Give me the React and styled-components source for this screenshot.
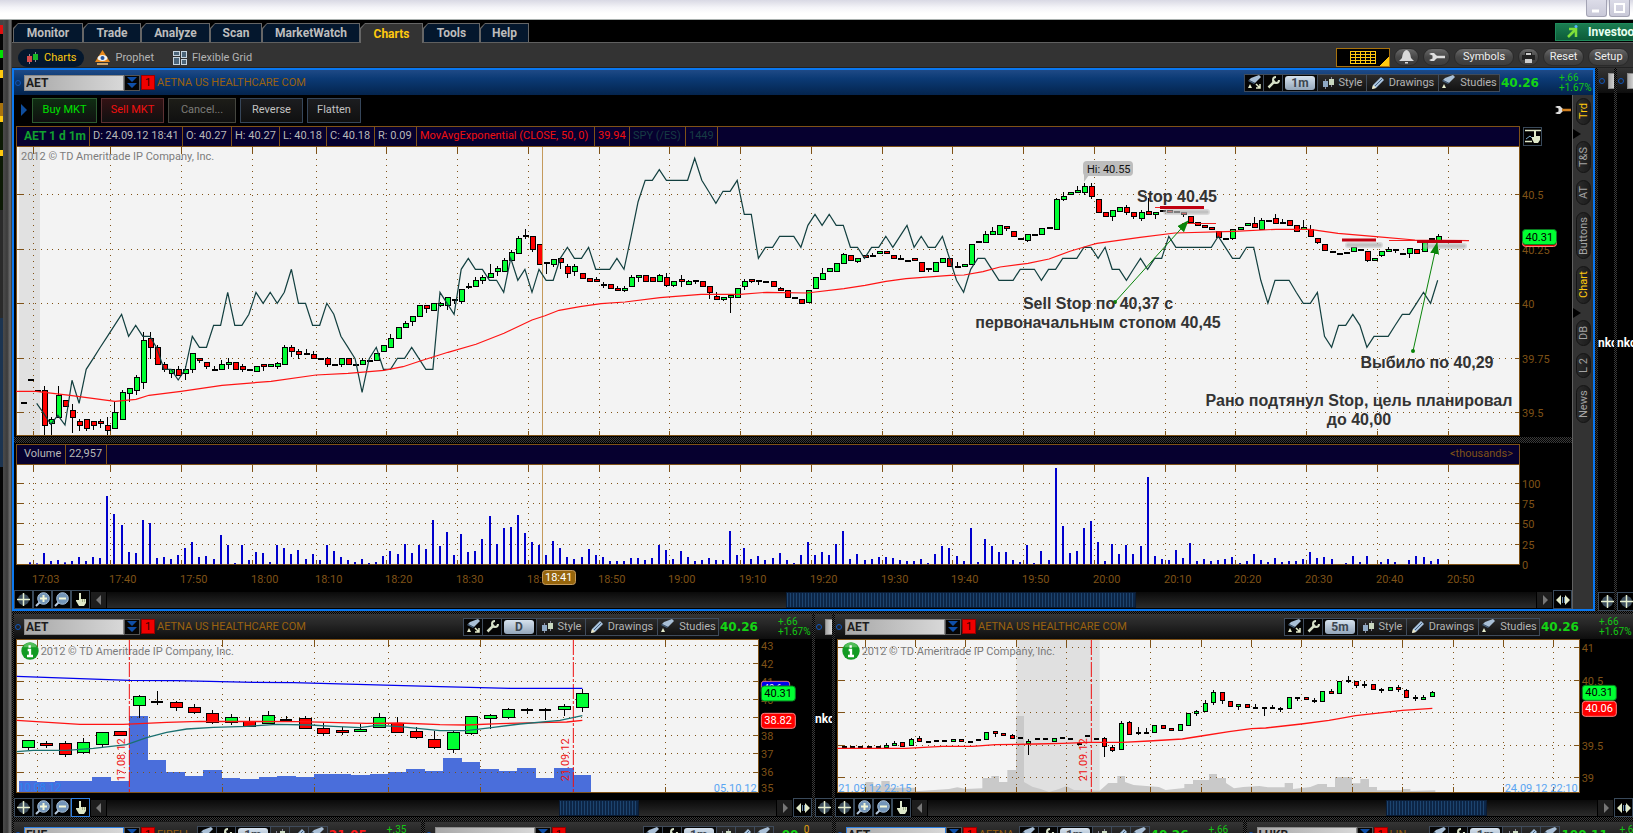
import React from "react";
import styled, { createGlobalStyle, css } from "styled-components";

const Global = createGlobalStyle`
  * { box-sizing: border-box; }
  body { margin: 0; background: #000; overflow: hidden; }
  button, input { font: inherit; color: inherit; margin: 0; padding: 0; border: 0; background: none; border-radius: 0; white-space: nowrap; }
  svg { display: block; flex: none; }
`;

const checker = "repeating-conic-gradient(#000 0 25%, #3a3a3a 0 50%) 0 0 / 2px 2px";
const brown = "#7f5217";

/* ---------- frame ---------- */
const Page = styled.div`
  display: flex; flex-direction: column; height: 100vh; overflow: hidden;
  font: 11px/14px Roboto, "Liberation Sans", Arial, sans-serif; color: #b9b9b9; background: #000;
`;
const WindowBar = styled.header`
  display: flex; justify-content: flex-end; gap: 2px; height: 20px; flex: none;
  padding-right: 3px; background: linear-gradient(#d9d9e4, #f4f4f8 40%, #fff 70%); border-bottom: 1px solid #a9b0ae;
`;
const WindowButton = styled.button`
  width: 21px; height: 17px; border: 1px solid #a3a3b4; border-top: 0; border-radius: 0 0 3px 3px;
  background: linear-gradient(#dcdce8, #c9c9d8); display: flex; justify-content: center; align-items: center;
`;
const Body = styled.div`display: flex; flex: 1; min-height: 0;`;
const Edge = styled.div`
  display: flex; width: 12px; flex: none;
  background: linear-gradient(90deg, #151515, #4a4a4a 30%, #3b3b3b 60%, #727272 85%, #333);
`;
const Behind = styled.div`
  width: 3px; background: linear-gradient(#444 0 5px, #e01010 5px 14px, #050505 14px 30px, #00e000 30px 38px, #050505 38px 50px, #ffc90e 50px 58px,
    #050505 58px 83px, #a9730d 83px 96px, #ffc90e 96px 102px, #0c1a05 102px 130px, #ffc90e 130px 136px, #0c1a05 136px 190px, #2a2a2a 190px 298px, #1c3450 298px 447px, #050505 447px);
`;
const Main = styled.main`display: flex; flex-direction: column; flex: 1; min-width: 0;`;
const TabRow = styled.nav`
  display: flex; height: 23px; padding: 3px 0 0 1px; flex: none; background: #000; border-bottom: 1px solid #606060;
`;
const Tab = styled.button`
  position: relative; width: ${p => p.$w}px; height: ${p => (p.$on ? 20 : 19)}px; flex: none;
  padding-top: 1px; font-weight: bold; font-size: 12px; color: ${p => (p.$on ? "#ffc90e" : "#bdbdbd")};
  background: #666; clip-path: polygon(5px 0, 100% 0, 100% 100%, 0 100%, 0 5px);
  &::before { content: ""; position: absolute; inset: 1px 1px 0 0; background: ${p => (p.$on ? "#333" : "#04172d")};
    clip-path: polygon(5px 0, 100% 0, 100% 100%, 1px 100%, 1px 5px); }
  span { position: relative; }
`;
const Investools = styled.button`
  display: flex; align-items: center; gap: 9px; width: 78px; height: 18px; margin-left: auto; padding-left: 11px; overflow: hidden;
  font-weight: bold; font-size: 12px; color: #e8fff0; background: linear-gradient(#1b7d51, #0c5c39); border: 1px solid #1f8a5b; border-right: 0;
`;
const SubBar = styled.div`
  display: flex; align-items: center; height: 25px; flex: none; padding: 5px 4px 0 6px; background: #333; border-bottom: 1px solid #222;
`;
const SubTab = styled.button`
  display: flex; align-items: center; gap: 5px; height: 18px; margin-right: 3px; padding: 0 8px; border-radius: 9px;
  color: ${p => (p.$on ? "#ffc90e" : "#b4b4b4")}; background: ${p => (p.$on ? "#04172d" : "none")};
`;
const Tools = styled.div`display: flex; gap: 4px; margin-left: auto;`;
const Pill = styled.button`
  display: flex; align-items: center; justify-content: center; width: ${p => p.$w}px; height: 18px; border-radius: 9px; color: #eee;
  background: linear-gradient(#6a6a6a, #474747 50%, #3c3c3c); border: 1px solid #2a2a2a;
`;
const GridButton = styled.button`
  display: flex; align-items: center; justify-content: center; width: 54px; height: 19px; border: 1px solid #a9730d;
  background: linear-gradient(135deg, transparent 0 86%, #ffc90e 86%) #000;
`;

/* ---------- panels ---------- */
const Row = styled.div`display: flex; min-height: 0; flex: none;`;
const Primary = styled.section`flex: 1; min-width: 0; border: 2px solid #0a78f0; background: #000;`;
const Panel = styled.section`flex: 1 1 0; min-width: 0; background: #000; overflow: hidden;`;
const Quarter = styled.section`flex: 0 0 25.1%; padding-top: 1px; background: #1a1a1a;`;
const Strip = styled.div`width: ${p => p.$w}px; flex: none; overflow: hidden; background: #000; display: flex; flex-direction: column;`;
const VBar = styled.div`width: ${p => p.$w || 3}px; flex: none; background: ${checker};`;
const HBar = styled.div`height: ${p => p.$h || 3}px; flex: none; background: ${checker};`;
const Header = styled.div`
  display: flex; align-items: center; height: 25px; padding-left: 1px; overflow: hidden; flex: none;
  background: ${p => (p.$blue ? "linear-gradient(#1f4a86, #0b3a75 35%, #04244d)" : "linear-gradient(#343434, #262626 40%, #0d0d0d)")};
`;
const Dot = styled.span`width: 6px; height: 6px; flex: none; margin-right: 3px; border: 1px solid #1054b8; border-radius: 50%;`;
const Symbol = styled.input`
  width: 100px; height: 16px; flex: none; padding: 0 1px; font-weight: bold; font-size: 12px; color: #1c1c1c; outline: 0;
  background: linear-gradient(90deg, #a8a8a8, #d8d8d8); border: 1px solid ${p => (p.$focus ? "#2f7fe0" : "#8a8a8a")};
  ${p => p.$edge && css`width: 8px; flex: 1;`}
`;
const Drop = styled.button`
  display: flex; align-items: center; justify-content: center; width: 16px; height: 16px; flex: none; background: #050505; border: 1px solid #555;
`;
const Link = styled.button`width: 14px; height: 15px; flex: none; margin: 0 2px 0 1px; color: #300; background: #f00000; border: 1px solid #900; line-height: 12px;`;
const Name = styled.span`flex: 1; min-width: 0; overflow: hidden; white-space: nowrap; color: #9a6210;`;
const ToolBox = styled.div`display: flex; flex: none; height: 18px; border: 1px solid #3f4b5b; border-left: 0; background: #141414;`;
const Tool = styled.button`
  display: flex; align-items: center; justify-content: center; gap: 4px; width: ${p => p.$w}px; border-left: 1px solid #3f4b5b; color: #b4b4b4;
  background: ${p => (p.$dark ? "#050505" : "linear-gradient(#2b2b2b, #121212)")};
`;
const Period = styled.span`
  width: 30px; height: 14px; border-radius: 3px; font-weight: bold; font-size: 12px; color: #3c4650; text-align: center; background: linear-gradient(#d6e2ee, #94a6ba);
`;
const Price = styled.strong`width: ${p => (p.$short ? 30 : 59)}px; flex: none; padding-left: ${p => (p.$short ? 8 : 1)}px; font: bold 12px/16px "DejaVu Sans", Verdana, sans-serif; color: ${p => (p.$down ? "#ff1a1a" : "#14d414")};`;
const Change = styled.span`width: ${p => (p.$short ? 28 : 34)}px; flex: none; font-size: 10px; line-height: 10px; color: ${p => p.$c || "#14c814"}; white-space: pre;`;
const TradeRow = styled.div`display: flex; align-items: center; gap: 4px; height: 31px; padding: 0 1px 1px 7px;
  svg:last-child { margin-left: auto; }`;
const tones = {
  buy: ["#00e000", "#0f2d12", "#2d5c31"], sell: ["#f01010", "#331214", "#5c3032"], off: ["#7c7c78", "#1d1d18", "#45463f"], plain: ["#c2c2c2", "#1c1d20", "#36465a"],
};
const Trade = styled.button`
  width: ${p => p.$w}px; height: 25px; color: ${p => tones[p.$tone][0]}; border: 1px solid ${p => tones[p.$tone][2]};
  background: linear-gradient(${p => tones[p.$tone][1]}, #101010);
`;
const Split = styled.div`display: flex;`;
const ChartCol = styled.div`flex: 1; min-width: 0;`;
const InfoLine = styled.div`display: flex; align-items: center; height: 20px; padding-left: 2px;`;
const Info = styled.div`
  display: flex; flex: 1; height: 20px; margin-right: ${p => (p.$tool ? 3 : 52)}px; border: 1px solid ${brown}; border-bottom: 0; background: #06002f;
  line-height: 18px; white-space: nowrap;
`;
const Cell = styled.span`
  width: ${p => p.$w}px; flex: none; padding-left: ${p => p.$pad || 3}px; border-right: 1px solid ${brown}; color: ${p => p.$c || "#b8b8b8"};
  font-weight: ${p => (p.$b ? "bold" : "normal")}; font-size: ${p => (p.$b ? 12 : 11)}px;
`;
const Unit = styled.span`margin-left: auto; padding-right: 6px; color: ${brown};`;
const Square = styled.button`
  display: flex; align-items: center; justify-content: center; width: 19px; height: 19px; flex: none; overflow: hidden; background: #000;
  border: 1px solid ${p => (p.$on ? "#2f7fe0" : "#39495a")}; margin-right: ${p => p.$mr || 0}px;
`;
const Scroll = styled.div`display: flex; height: 19px; overflow: hidden;`;
const Arrow = styled.button`display: flex; align-items: center; justify-content: center; width: 15px; height: 16px; margin: 2px 1px 0; flex: none; background: #1d1d1d;`;
const Track = styled.div`flex: 1; height: 16px; margin-top: 2px; background: linear-gradient(#0a0a0a, #2b2b2b);`;
const Thumb = styled.div`
  height: 16px; margin-left: ${p => p.$at}%; width: ${p => p.$size}%; border: 1px solid #0a1b33;
  background: repeating-linear-gradient(90deg, #1d446f 0 1px, #0c2546 1px 3px);
`;
const SideTabs = styled.nav`
  display: flex; flex-direction: column; align-items: center; gap: 7px; width: 21px; padding-top: 3px; background: #333; border-left: 1px solid #606060;
`;
const SideTab = styled.button`
  width: 15px; height: ${p => p.$h}px; margin-top: ${p => p.$mt || 0}px; writing-mode: vertical-rl; transform: rotate(180deg); line-height: 13px; text-align: center;
  color: ${p => (p.$on ? "#ffc90e" : "#a4a4a4")}; border: 1px solid #151515; border-radius: 8px; background: linear-gradient(90deg, #1c1c1c, #2c2c2c);
`;
const Notch = styled.span`align-self: flex-start; width: 0; height: 0; margin-top: -3px; border: 5px solid transparent; border-left: 8px solid #000; border-right: 0;`;
const StripBody = styled.div`
  display: flex; align-items: center; flex: 1; overflow: hidden; white-space: nowrap; color: #fff; font-weight: bold; font-size: 12px; min-height: ${p => p.$h}px;
`;

/* ---------- icons ---------- */
const Candles = ({ a = "#8fa9c4", b = "#c9d8c0" }) => (
  <svg width="13" height="12"><path d="M3.5 2v10M9.500 0v10" stroke="#889" /><rect x="1" y="4" width="5" height="6" fill={a} /><rect x="7" y="2" width="5" height="6" fill={b} /></svg>
);
const Flask = ({ arrow }) => (
  <svg width="15" height="15"><path d="M4 3 12 0 14 2 8 8 2 5Z" fill="#a9bfd6" /><path d="M2 5 8 8 7 9 1 6Z" fill="#46607c" /><path d="M3 9 5 13H1Z" fill="#e5eccb" />{arrow && <path d="M9 9l4 4M13 9v4H9" stroke="#e5eccb" strokeWidth="1.500" fill="none" />}</svg>
);
const Wrench = () => (
  <svg width="13" height="13"><path d="M1.500 11.500 8 5" stroke="#d6e0c8" strokeWidth="2.500" /><path d="M9 1a3 3 0 1 0 3 3" stroke="#d6e0c8" strokeWidth="2" fill="none" /></svg>
);
const Pencil = () => (
  <svg width="14" height="14"><path d="M1 13 2 9 10 1 13 4 5 12Z" fill="#a9c3de" /><path d="M1 13 2 9 5 12Z" fill="#efe9c2" /><path d="M4 10 11 3" stroke="#44617f" /></svg>
);
const FlatWrench = ({ grip = "#ddd" }) => (
  <svg width="16" height="8"><path d="M0 1 2 0H5L8 3V5L5 8H2L0 7 3.500 5.500V2.500Z" fill="#ddd" /><path d="M7 4h9" stroke={grip} strokeWidth="2.500" /></svg>
);
const Cross = () => (
  <svg width="15" height="15"><circle cx="7.500" cy="7.500" r="5.500" fill="#3e4f5e" /><path d="M7.500 1v13M1 7.500h13" stroke="#e6f0d0" strokeWidth="1.500" /></svg>
);
const Zoomer = ({ plus }) => (
  <svg width="15" height="15"><path d="M1 14 5 10" stroke="#b8cbe0" strokeWidth="2" /><circle cx="8.500" cy="6.500" r="5.800" fill="#7395b8" stroke="#aac3dd" /><path d={plus ? "M8.500 3v7M5 6.500h7" : "M5 6.500h7"} stroke="#f3f7d8" strokeWidth="2" /></svg>
);
const Hand = () => (
  <svg width="12" height="15"><path d="M4 1h2v6h5v4l-2 3H4L1 9V8h3Z" fill="#dfe8c8" /><path d="M7.500 7v3M9.500 7v3" stroke="#8a9a70" strokeWidth=".7" /></svg>
);
const DrawHand = () => (
  <svg width="16" height="16"><path d="M0 2.500h16M0 13.500h7" stroke="#dfe8c8" strokeWidth="1.500" /><path d="M1 11 5 8 7 10" stroke="#7fb0d0" fill="none" /><path d="M9 3h2v5h4v4l-2 3H9L7 11V9h2Z" fill="#dfe8c8" /></svg>
);
const Expand = () => (
  <svg width="14" height="12"><path d="M0 6 5 1V11ZM14 6 9 1V11Z" fill="#e3ecca" /><path d="M6.500 3v6M8.500 3v6" stroke="#6f8fb0" /></svg>
);
const Tri = ({ d }) => <svg width="6" height="10"><path d={d} fill="#777" /></svg>;
const Chevrons = () => <svg width="10" height="12"><path d="M0 0h10L5 5ZM0 6h10L5 11Z" fill="#0f4fa8" /></svg>;

/* ---------- chart pieces ---------- */
const G = "#00ff32", R = "#ff0000", K = "k";
const fills = { g: G, r: R };

/* One candle: [kind, top, bottom, high, low]; a "k" candle has open = close */
function Candle({ x, c, w, u = 1, at = v => v }) {
  const [k, top, bot = top, hi = top, lo = bot] = c;
  const h = k === K ? 2 * u : Math.max(at(bot) - at(top), 2 * u);
  return (
    <g shapeRendering="crispEdges">
      {(hi < top || lo > bot) && <path d={`M${x} ${at(hi)}V${at(lo)}`} stroke="#000" strokeWidth={u} />}
      <rect x={x - w / 2} y={at(top) - (k === K ? u : 0)} width={w} height={h} fill={k === K ? "#000" : fills[k]} stroke={k === K ? "none" : "#000"} strokeWidth={u} />
    </g>
  );
}
const Grid = ({ xs, ys, l, r, t, b, u = 1 }) => (
  <g stroke={brown} strokeWidth={u} shapeRendering="crispEdges" fill="none">
    {xs.map(x => <g key={x}><path d={`M${x} ${t}V${b}`} strokeDasharray={`${u} ${5 * u}`} /><path d={`M${x} ${t}v${6 * u}M${x} ${b}v${-5 * u}`} /></g>)}
    {ys.map(y => <g key={y}><path d={`M${l} ${y}H${r}`} strokeDasharray={`${u} ${5 * u}`} /><path d={`M${l} ${y}h${6 * u}M${r} ${y}h${-5 * u}`} /></g>)}
    <rect x={l} y={t} width={r - l} height={b - t} />
  </g>
);
const Tag = ({ x, y, u = 1, fill, color = "#000", children }) => (
  <g><rect x={x} y={y} width={34 * u} height={15 * u} rx={3 * u} fill={fill} stroke={color === "#000" ? "#0a7a20" : "#ff8080"} strokeWidth={u} /><text x={x + 3 * u} y={y + 11 * u} fontSize={11 * u} fill={color}>{children}</text></g>
);
const pts = list => list.map(p => p.join(",")).join(" ");

const r = "r", g = "g";
const minuteCandles = [
  [K,849],[K,780],[K,812],[r,811,916,798,948],[g,898,910,892,948],[g,826,892,798],[r,841,859],[r,871,892,853,938],[r,904,916,898,932],[r,898,925,898,932],
  [r,904,916,904,930],[r,904,910,898,924],[r,916,931,892,944],[g,877,925,845],[g,817,898,811],[g,805,821,805,845],[g,772,811,766,825],[g,661,787,637,806],[r,655,682,637,716],[r,682,733,676],
  [r,733,748,727,755],[g,748,760,748,773],[r,748,766,739],[g,748,760,739,781],[g,700,748,700,760],[r,715,721,715,728],[r,727,739,727,748],[K,750,750,739],[g,733,748,721],[g,727,733,715,748],
  [r,727,748],[r,739,748,733,755],[K,750],[g,739,754],[r,733,739,733,754],[g,733,739],[g,730,739,725,748],[g,682,733,676],[r,682,694,676,710],[r,694,703,688,716],
  [K,702,703,688],[r,703,715,694],[K,716],[r,715,733,710,740],[K,735],[g,715,733,715,740],[r,715,733],[K,735],[g,721,733,715],[K,722],
  [g,700,721],[g,676,694],[g,655,682,643],[g,622,655],[g,610,622,604],[g,589,604,589,617],[g,556,589],[r,556,565,556,578],[g,550,571],[g,550,556,546,562],
  [g,532,556,532,571],[K,540,540,540,552],[g,508,544,508,551],[K,500,500,490,506],[g,481,499,472],[g,472,481,466,493],[g,460,472,433],[g,445,454,438,467],[g,421,454,414],[g,397,421,391],
  [g,355,400,349],[K,348,348,328,358],[r,349,388,349,395],[r,373,433],[K,430,430,425,462],[g,418,433,418,440],[r,415,427,415,448],[r,439,460,433,473],[g,439,454,433,467],[r,460,475],
  [r,475,484],[r,478,484,472],[K,494,494,485,503],[r,493,505],[r,505,511,498],[g,505,511,498,517],[g,472,499,466],[g,466,472,466,485],[r,466,484],[r,472,484],
  [g,466,484,462],[r,472,496,460,502],[g,484,496,484,502],[r,478,484,466,500],[g,484,493,480],[K,483,483,480,492],[r,484,499],[r,499,517,499,536],[r,529,538,517],[g,532,538,532,544],
  [g,526,532,526,578],[g,505,532],[g,484,499,478,510],[r,478,484,478,490],[K,483,483,483,494],[K,486],[r,484,499],[r,505,511,500],[r,511,532],[K,534],
  [r,538,550],[g,511,547],[g,472,505],[g,460,478,445],[g,445,454],[g,430,454],[g,403,430,400],[r,406,421],[g,415,424,415,430],[r,406,412],
  [K,407,407,400],[g,394,400],[r,394,400],[r,406,415],[K,416,416,404],[K,423],[r,415,421],[r,427,454],[K,447,447,447,456],[g,427,454],
  [g,415,427],[r,415,439],[K,440,440,427],[g,433,439],[g,373,433],[K,365],[g,343,367,333],[g,334,343,322],[g,316,343],[r,319,325,319,333],
  [r,334,349],[K,356],[g,343,361,343,366],[K,345],[g,325,343],[K,324],[g,238,328,235],[g,229,238,217,244],[g,217,223],[g,211,217,199],
  [g,199,217,190,224],[r,199,229,190,238],[r,238,277],[r,277,289],[g,271,289,271,302],[g,262,274],[r,262,277,256,284],[r,277,289,277,296],[g,277,295,271,302],[r,274,283,235],
  [g,277,283,277,297],[K,273],[r,271,277],[K,276],[r,277,283,277,290],[r,289,307],[r,307,316],[r,316,322],[r,322,328],[r,334,352],
  [K,356],[g,328,355,328,361],[g,322,328],[g,310,316],[r,310,322,292],[g,301,328,295],[K,303],[r,295,310,283],[K,310,310,298],[r,301,316],
  [r,316,334],[g,322,328,301],[r,328,349,316],[r,355,367,355,373],[r,373,391],[K,395],[K,402],[K,399],[g,382,394],[K,389],
  [r,394,421,394,427],[g,415,421],[g,394,406,394,410],[g,388,394,380],[K,391,391,391,400],[K,402],[g,385,400,385,415],[r,388,400],[g,361,394],[K,356],[g,349,361,343],
];
/* overlay symbol, one value a minute from the third candle on */
const spy = [850,880,913,886,915,781,850,748,715,682,649,616,583,649,616,649,649,685,748,748,780,748,649,682,682,616,616,517,616,616,583,517,550,517,550,517,448,550,550,616,616,550,583,649,682,716,817,716,682,748,748,715,715,682,715,748,748,517,550,583,448,415,448,448,481,481,517,415,481,448,517,448,481,481,415,382,415,415,382,448,448,448,415,448,350,245,181,181,149,181,181,181,181,115,181,215,250,214,214,181,283,283,415,382,382,349,349,349,382,316,283,316,283,316,316,382,382,415,382,382,349,382,349,316,382,349,382,382,349,415,481,517,448,415,415,448,481,481,481,448,448,448,481,448,448,415,415,415,382,382,415,382,448,448,481,448,415,448,415,415,349,382,382,382,382,382,382,349,382,415,415,382,382,481,550,481,481,481,517,550,550,517,649,682,616,616,583,616,682,649,649,649,616,583,583,550,517,550,481];
const average = [[16,814],[36,814],[70,826],[115,844],[136,838],[149,826],[181,814],[222,796],[271,784],[316,765],[348,760],[384,751],[403,740],[421,722],[448,697],[476,673],[504,640],[532,600],[545,587],[559,571],[580,560],[601,551],[625,546],[660,533],[701,523],[740,523],[767,517],[807,519],[844,506],[865,496],[886,484],[906,476],[950,466],[964,465],[983,455],[1000,441],[1028,430],[1049,417],[1070,394],[1090,376],[1097,370],[1140,352],[1175,339],[1234,334],[1276,328],[1310,328],[1338,340],[1376,350],[1415,360],[1469,362]];
const volume = [367,370,339,363,360,367,363,351,363,351,354,168,222,255,336,339,240,249,354,351,357,345,324,306,351,348,357,285,315,369,315,360,336,339,366,315,324,342,330,357,342,360,315,333,351,360,366,357,369,366,348,333,342,312,339,315,327,240,318,276,345,282,336,333,297,228,312,264,261,225,279,306,315,345,303,324,351,357,351,327,345,351,363,363,363,354,354,360,354,315,330,357,333,351,363,360,354,360,360,273,345,324,357,348,360,354,339,360,369,345,306,345,336,345,312,273,357,342,360,357,351,351,354,360,363,363,357,369,342,318,324,348,363,264,366,297,318,336,336,360,366,315,369,333,360,84,258,339,333,264,243,306,363,312,342,315,342,318,111,348,357,360,330,354,309,363,357,363,360,357,351,369,363,342,360,366,354,366,363,363,357,336,354,351,357,373,369,348,366,348,373,366,357,366,373,360,348,351,363,357];
const times = [[33,"17:03"],[110,"17:40"],[181,"17:50"],[252,"18:00"],[316,"18:10"],[386,"18:20"],[457,"18:30"],[528,"18:40"],[599,"18:50"],[669,"19:00"],[740,"19:10"],[811,"19:20"],[882,"19:30"],[952,"19:40"],[1023,"19:50"],[1094,"20:00"],[1165,"20:10"],[1235,"20:20"],[1306,"20:30"],[1377,"20:40"],[1448,"20:50"]];
const minuteX = i => 22.5 + i * 7.076;
const py = v => 120 + v / 3;
const timeXs = times.map(t => t[0] + 0.5);

const Note = ({ x, y, children }) => <text x={x} y={y} textAnchor="middle" fontFamily="Liberation Sans, Arial, sans-serif" fontSize="16" fontWeight="bold" fill="#333">{children}</text>;

function PriceChart() {
  return (
    <svg width="100%" height="290" viewBox="14 146 1558 290" preserveAspectRatio="xMinYMin meet">
      <defs>
        <marker id="head" markerUnits="userSpaceOnUse" markerWidth="14" markerHeight="10" refX="11" refY="4.500" orient="auto"><path d="M0 0 12 4.500 0 9Z" fill="#0a840a" /></marker>
      </defs>
      <rect x="16" y="146" width="1504" height="290" fill="#f3f3f3" />
      <rect x="19" y="147" width="21" height="288" fill="#e1e1e1" />
      <Grid xs={timeXs} ys={[194.5, 249.5, 303.5, 358.5, 412.5]} l={16.5} r={1519.5} t={146.5} b={435.5} />
      <text x="21" y="160" fontSize="11" fill="#7c7c7c">2012 © TD Ameritrade IP Company, Inc.</text>
      {minuteCandles.map((c, i) => <Candle key={i} x={Math.round(minuteX(i)) + 0.5} c={c} w={c[0] === K ? 6 : 5} at={v => Math.min(py(v), 435)} />)}
      <path d="M542.500 147V435" stroke="#c49a5c" />
      <polyline points={spy.map((v, i) => `${minuteX(i + 2).toFixed(1)},${py(v).toFixed(1)}`).join(" ")} fill="none" stroke="#123f3f" strokeWidth="1.200" />
      <polyline points={average.map(([x, v]) => `${x},${py(v).toFixed(1)}`).join(" ")} fill="none" stroke="#ff1414" strokeWidth="1.200" />
      <path d="M1084 174v8l5-7Z" fill="#bdbdbd" />
      <rect x="1083" y="161" width="50" height="15" rx="4" fill="#bdbdbd" />
      <text x="1087" y="173" fontSize="11" fill="#111">Hi: 40.55</text>
      <path d="M1166 212h41M1348 245h32M1426 246h38" stroke="#bbb" strokeWidth="6" strokeLinecap="round" opacity=".45" />
      <path d="M1166 212h41M1348 245h32M1426 246h38" stroke="#aaa" strokeWidth="3" strokeLinecap="round" opacity=".5" />
      <path d="M1155 207.500h10M1182 223.500h34M1389 240.500h80" stroke="#f02020" />
      <path d="M1160 207.500h44M1342 240h34M1417 241.500h45" stroke="#c00010" strokeWidth="3" />
      <path d="M1115 302 1188 221" stroke="#0a840a" markerEnd="url(#head)" />
      <path d="M1413 351 1437 243" stroke="#0a840a" markerEnd="url(#head)" />
      <circle cx="1115" cy="302" r="2" fill="#0a840a" /><circle cx="1413" cy="351" r="2" fill="#0a840a" />
      <Note x="1177" y="202">Stop 40.45</Note>
      <Note x="1098" y="309">Sell Stop по 40,37 с</Note>
      <Note x="1098" y="328">первоначальным стопом 40,45</Note>
      <Note x="1427" y="368">Выбило по 40,29</Note>
      <Note x="1359" y="406">Рано подтянул Stop, цель планировал</Note>
      <Note x="1359" y="425">до 40,00</Note>
      <g fontSize="11" fill={brown}>
        <text x="1522" y="199">40.5</text><text x="1522" y="254">40.25</text><text x="1522" y="308">40</text><text x="1522" y="363">39.75</text><text x="1522" y="417">39.5</text>
      </g>
      <Tag x={1522.5} y={231.5} fill="#e00000" color="#fff" />
      <Tag x={1522.5} y={229.5} fill={G}>40.31</Tag>
    </svg>
  );
}

function VolumeChart() {
  return (
    <svg width="100%" height="126" viewBox="14 464 1558 126" preserveAspectRatio="xMinYMin meet">
      <rect x="16" y="464" width="1504" height="101" fill="#f3f3f3" />
      <Grid xs={timeXs} ys={[483.5, 503.5, 523.5, 544.5]} l={16.5} r={1519.5} t={464.5} b={564.5} />
      <path d="M542.500 465V564" stroke="#c49a5c" />
      {volume.map((v, i) => <rect key={i} x={Math.round(minuteX(i + 1)) - 1} y={440 + v / 3} width="2" height={(373 - v) / 3} fill="#0000cc" />)}
      <g fontSize="11" fill={brown}>
        {times.map(([x, t]) => <text key={t} x={x - 1} y="583">{t}</text>)}
        <text x="1522" y="488">100</text><text x="1522" y="508">75</text><text x="1522" y="528">50</text><text x="1522" y="549">25</text><text x="1522" y="569">0</text>
      </g>
      <rect x="542.500" y="570.500" width="33" height="14" rx="3" fill="#96650c" stroke="#c49a5c" />
      <text x="545" y="581" fontSize="11" fill="#fff">18:41</text>
    </svg>
  );
}

const InfoDot = ({ x }) => (
  <g><circle cx={x} cy="123" r="26" fill="#129a22" /><path d={`M${x - 20} 112a21 21 0 0 1 40 0Z`} fill="#7fd67f" opacity=".6" /><path d={`M${x - 1} 106v7M${x - 7} 120h7v17M${x - 9} 138h18`} stroke="#fff" strokeWidth="7" fill="none" /></g>
);

const dayCandles = [[85,g,391,413,391,420],[139,r,400,406,394,415],[196,r,400,433,394,440],[250,g,397,427,385,431],[307,g,367,402,367,410],[361,r,364,377],[418,g,259,287,255,323],[472,K,276,276,243,284],[529,r,277,293,274,302],[583,r,292,307,282,311],[637,r,310,338,301,342],[694,g,322,337,313,344],[748,r,334,349,322],[805,g,316,341,304],[859,K,331,331,319],[916,r,325,355,319],[970,r,355,371,340,377],[1027,r,361,367,350,374],[1081,g,358,364,343],[1138,g,322,352,310],[1192,r,340,367,322],[1249,r,364,383,352,387],[1303,r,388,412,364,416],[1360,g,367,418,360,429],[1414,g,319,371,319,375],[1471,g,316,325,312,357],[1525,g,298,322,294,327],[1582,K,299,299,293,312],[1636,K,299,299,293,330],[1693,g,289,298,283,318],[1747,g,250,292,236,305]];
const dayVolume = [[57,513],[111,517],[165,513],[276,501],[333,513],[388,318],[444,450],[498,486],[555,498],[609,480],[666,504],[720,507],[777,501],[831,498],[888,501],[942,492],[1053,495],[1110,492],[1165,486],[1218,477],[1275,483],[1329,444],[1386,456],[1440,477],[1497,483],[1551,474],[1608,504],[1662,474],[1721,495]];

/* Daily and five-minute charts are drawn on a canvas of three units to the pixel */
function DayChart() {
  return (
    <svg width="100%" height="154" viewBox="42 87 2394 462" preserveAspectRatio="xMinYMin meet">
      <rect x="50" y="88" width="2226" height="460" fill="#f3f3f3" />
      <path d={`M57 546${dayVolume.map(([x, y]) => `H${x}V${y}`).join("")}H1773V546Z`} fill="#4a6edb" shapeRendering="crispEdges" />
      <Grid u={3} xs={[112, 667, 943, 1165, 1441, 1996]} ys={[106, 160, 214, 268, 322, 376, 430, 487]} l={50} r={2275} t={89} b={547} />
      <text x="122" y="135" fontSize="33" fill="#7c7c7c">2012 © TD Ameritrade IP Company, Inc.</text>
      <InfoDot x={90} />
      {dayCandles.map(([x, ...c]) => <Candle key={x} x={x} c={c} w={36} u={3} />)}
      <path d="M388 90V546M1720 90V546" stroke="#ee1010" strokeWidth="3" strokeDasharray="45 6 9 6" />
      <g fill="none" strokeWidth="4">
        <polyline stroke="#0000ee" points="50,199 388,211 530,212 760,217 880,218 1320,230 1440,233 1530,235 1747,235" />
        <polyline stroke="#ff1414" points="50,331 240,343 370,343 500,337 600,334 900,335 1100,340 1200,339 1320,344 1400,345 1500,341 1650,337 1700,336 1747,331" />
        <polyline stroke="#1a7070" points="50,425 100,421 200,421 280,415 380,404 440,383 500,367 560,357 640,352 740,349 830,343 930,345 1000,349 1080,353 1130,346 1200,350 1320,362 1400,362 1480,352 1560,342 1680,331 1747,317" />
      </g>
      <g fontSize="33">
        <g fill="#ee1010"><text transform="translate(376 514) rotate(-90)">17.08.12</text><text transform="translate(1708 514) rotate(-90)">21.09.12</text></g>
        <text x="55" y="543" fill="#2a86f0">10.08.12</text>
        <text x="2270" y="545" textAnchor="end" fill="#5aa5f2">05.10.12</text>
        <g fill={brown}>{[43, 42, 41, 40, 39, 38, 37, 36].map((n, i) => <text key={n} x="2283" y={119 + i * 54.300}>{n}</text>)}<text x="2283" y="547">35</text></g>
      </g>
      <Tag x={2284} y={214} u={2.500} fill="#0000ee" color="#fff">40.6</Tag>
      <Tag x={2284} y={228} u={3} fill={G}>40.31</Tag>
      <Tag x={2284} y={310} u={3} fill={R} color="#fff">38.82</Tag>
    </svg>
  );
}

const fiveCandles = [[46,K,412],[70,K,412],[94,K,412],[121,K,412],[148,K,412],[172,g,406,412,400],[196,g,400,406,394],[220,r,397,409],[247,g,388,406,385],[271,r,385,394,378],[298,K,395],[322,K,393],[346,K,393],[373,g,388,394],[397,r,388,394],[424,K,395],[448,K,391],[472,g,367,388],[499,r,364,370,364,380],[523,r,370,376],[550,r,376,385,372],[575,K,385],[598,g,394,400,386,434],[625,K,386],[649,K,386],[676,g,385,394],[700,K,385],[724,K,386],[752,K,401],[775,K,378],[802,K,387],[826,r,385,409,380,440],[850,r,412,421,406,426],[877,g,340,418,334],[901,r,337,373,333],[928,K,369,369,351,376],[952,K,369,369,354],[976,g,346,367],[1003,r,346,355],[1027,r,355,360],[1054,g,343,361],[1078,g,310,346],[1102,g,304,310,300,318],[1129,g,280,305,271],[1153,g,247,277,241,284],[1180,r,247,271,247,281],[1205,r,274,289],[1228,g,284,289,284,299],[1255,r,283,292],[1279,K,294,294,283],[1306,K,294,294,294,318],[1330,K,294,294,286],[1354,K,297,297,291,306],[1381,g,262,295],[1405,K,265,265,265,272],[1432,r,262,268],[1456,K,272,272,265,278],[1480,g,244,275],[1507,r,244,250,238],[1531,g,214,250],[1558,K,212,212,199,218],[1582,r,214,227,214,233],[1606,K,225,225,213,234],[1633,r,223,238],[1657,K,240,240,234,250],[1684,g,232,241],[1708,r,232,238,226,245],[1732,r,241,263,236],[1759,K,264,264,256,272],[1783,g,262,265,256],[1810,g,247,259,243]];
const fiveVolume = [[109,546],[109,516],[133,516],[133,528],[157,528],[157,513],[182,513],[182,533],[260,533],[260,544],[360,537],[385,532],[410,537],[460,535],[460,504],[487,504],[487,498],[510,498],[510,516],[535,516],[535,480],[561,480],[561,318],[585,318],[585,516],[610,530],[635,537],[660,546],[690,537],[712,528],[735,540],[812,542],[838,519],[865,519],[865,498],[888,498],[888,516],[914,525],[990,531],[1010,540],[1066,534],[1066,522],[1092,522],[1092,510],[1140,510],[1140,492],[1164,492],[1164,504],[1191,504],[1191,519],[1215,535],[1243,531],[1291,528],[1317,532],[1367,532],[1367,519],[1392,519],[1392,537],[1444,531],[1467,522],[1494,522],[1494,531],[1518,531],[1518,501],[1569,501],[1569,520],[1594,520],[1594,507],[1620,507],[1620,531],[1644,531],[1644,541],[1719,541],[1719,537],[1744,537],[1744,543],[1819,541],[1819,546]];

function FiveChart() {
  return (
    <svg width="100%" height="154" viewBox="18 87 2391 462" preserveAspectRatio="xMinYMin meet">
      <rect x="25" y="88" width="2226" height="460" fill="#f3f3f3" />
      <rect x="562" y="90" width="250" height="456" fill="#e0e0e0" />
      <polygon points={pts(fiveVolume)} fill="#c9c9c9" />
      <Grid u={3} xs={[109, 259, 409, 562, 712, 964, 1117, 1267, 1417, 1570, 1720, 1873, 2023, 2173]} ys={[112, 211, 307, 406, 502]} l={26} r={2251} t={89} b={547} />
      <text x="98" y="135" fontSize="33" fill="#7c7c7c">2012 © TD Ameritrade IP Company, Inc.</text>
      <InfoDot x={66} />
      {fiveCandles.map(([x, ...c]) => <Candle key={x} x={x} c={c} w={c[0] === K ? 14 : 12} u={3} />)}
      <path d="M787 90V546" stroke="#ee1010" strokeWidth="3" strokeDasharray="45 6 9 6" />
      <polyline fill="none" stroke="#ff1414" strokeWidth="4" points="25,415 230,415 340,409 430,409 500,404 620,402 700,400 780,397 880,397 960,393 1060,387 1117,378 1200,365 1267,356 1310,354 1417,342 1500,331 1530,326 1580,317 1660,308 1720,301 1810,295" />
      <g fontSize="33">
        <text transform="translate(775 514) rotate(-90)" fill="#ee1010">21.09.12</text>
        <text x="28" y="545" fill="#5aa5f2">21.09.12 22:15</text>
        <text x="2246" y="545" textAnchor="end" fill="#5aa5f2">24.09.12 22:10</text>
        <g fill={brown}><text x="2258" y="126">41</text><text x="2258" y="224">40.5</text><text x="2258" y="320">40</text><text x="2258" y="419">39.5</text><text x="2258" y="515">39</text></g>
      </g>
      <Tag x={2260} y={226} u={3} fill={G}>40.31</Tag>
      <Tag x={2260} y={274} u={3} fill={R} color="#fff">40.06</Tag>
    </svg>
  );
}

/* ---------- assembled parts ---------- */
function ChartHeader({ blue, focus, symbol, name, period, compact, short, price, down, change, changeColor }) {
  return (
    <Header $blue={blue}>
      <Dot />
      <Symbol aria-label="Symbol" defaultValue={symbol} $focus={focus} />
      <Drop aria-label="Symbol list"><Chevrons /></Drop>
      <Link>1</Link>
      <Name>{name}</Name>
      <ToolBox>
        <Tool $w={19} $dark aria-label="Share"><Flask arrow /></Tool>
        <Tool $w={19} $dark aria-label="Settings"><Wrench /></Tool>
        <Tool $w={35} $dark><Period>{period}</Period></Tool>
        <Tool $w={compact ? 19 : 49} aria-label="Style"><Candles />{!compact && "Style"}</Tool>
        <Tool $w={compact ? 19 : 72} aria-label="Drawings"><Pencil />{!compact && "Drawings"}</Tool>
        <Tool $w={compact ? 19 : 61} aria-label="Studies"><Flask />{!compact && "Studies"}</Tool>
      </ToolBox>
      <Price $down={down} $short={short}>{price}</Price>
      <Change $c={changeColor} $short={short}>{change}</Change>
    </Header>
  );
}
const Bottom = ({ at, size, hand }) => (
  <Scroll>
    <Square aria-label="Crosshair"><Cross /></Square>
    <Square aria-label="Zoom in"><Zoomer plus /></Square>
    <Square aria-label="Zoom out"><Zoomer /></Square>
    <Square aria-label="Pan" $on={hand}><Hand /></Square>
    <Arrow aria-label="Scroll left"><Tri d="M5 0V10L0 5Z" /></Arrow>
    <Track><Thumb $at={at} $size={size} /></Track>
    <Arrow aria-label="Scroll right"><Tri d="M1 0V10L6 5Z" /></Arrow>
    <Square aria-label="Fit"><Expand /></Square>
  </Scroll>
);
const SideStrip = ({ w, h }) => (
  <Strip $w={w}>
    <Header><Dot /><Symbol aria-label="Symbol" $edge /></Header>
    <StripBody $h={h}>nkc</StripBody>
    <Square aria-label="Crosshair"><Cross /></Square>
  </Strip>
);
const Gap = styled.div`height: ${p => p.$h}px;`;

const tabs = [["Monitor", 70], ["Trade", 58], ["Analyze", 69], ["Scan", 52], ["MarketWatch", 98], ["Charts", 63], ["Tools", 57], ["Help", 49]];

export default function App() {
  return (
    <Page>
      <Global />
      <WindowBar>
        <WindowButton aria-label="Minimize"><svg width="11" height="10"><path d="M1 8h7" stroke="#fff" strokeWidth="3" /></svg></WindowButton>
        <WindowButton aria-label="Maximize"><svg width="12" height="12"><rect x="1" y="2" width="9" height="8" fill="none" stroke="#fff" strokeWidth="2" /></svg></WindowButton>
      </WindowBar>
      <Body>
        <Edge><Behind /></Edge>
        <Main>
          <TabRow>
            {tabs.map(([t, w]) => <Tab key={t} $w={w} $on={t === "Charts"}><span>{t}</span></Tab>)}
            <Investools><svg width="12" height="14"><path d="M2 4h7v8M9 4 1 12" stroke="#7fe03a" strokeWidth="2.500" fill="none" /><circle cx="9" cy="1.500" r="1.500" fill="#5ab4ff" /></svg>Investools</Investools>
          </TabRow>
          <SubBar>
            <SubTab $on><Candles a="#d84a4a" b="#18b428" />Charts</SubTab>
            <SubTab><svg width="15" height="15"><path d="M7.500 0 15 12H0Z" fill="#e88a1c" /><ellipse cx="7.500" cy="8" rx="5" ry="3" fill="#f3f3f3" /><circle cx="7.500" cy="8" r="2" fill="#2456a0" /><path d="M2 14h11" stroke="#caa36a" strokeWidth="2" /></svg>Prophet</SubTab>
            <SubTab><svg width="14" height="14" fill="#4b6478" stroke="#c5d4e0"><rect x=".5" y=".5" width="6" height="4" /><rect x="8.500" y=".5" width="5" height="6" /><rect x=".5" y="6.500" width="6" height="7" /><rect x="8.500" y="8.500" width="5" height="5" /></svg>Flexible Grid</SubTab>
            <Tools>
              <GridButton aria-label="Grid"><svg width="26" height="13" stroke="#ffc90e" fill="none"><path d="M.5.5h25v12H.5ZM0 3.500h26M0 6.500h26M0 9.500h26M5.500 0v13M10.500 0v13M15.500 0v13M20.500 0v13" shapeRendering="crispEdges" /></svg></GridButton>
              <Pill $w={25} aria-label="Alerts"><svg width="15" height="14"><path d="M7.500 0c4 1 4 6 4.500 8l3 3H0l3-3c.500-2 .500-7 4.500-8ZM6 12h3v1.500H6Z" fill="#d8d8d8" /></svg></Pill>
              <Pill $w={27} aria-label="Tools"><FlatWrench /></Pill>
              <Pill $w={60}>Symbols</Pill>
              <Pill $w={21} aria-label="Print"><svg width="13" height="11"><path d="M3 0h7v3h3v5H0V3h3Z" fill="#222" /><path d="M3 7h7v4H3ZM4 1h5v2H4Z" fill="#ccc" /></svg></Pill>
              <Pill $w={41}>Reset</Pill>
              <Pill $w={41}>Setup</Pill>
            </Tools>
          </SubBar>

          <Row>
            <Primary>
              <ChartHeader blue symbol="AET" name="AETNA US HEALTHCARE COM" period="1m" price="40.26" change={"+.66\n+1.67%"} />
              <Split>
                <ChartCol>
                  <TradeRow>
                    <svg width="7" height="12"><path d="M0 0 6 6 0 12Z" fill="#0e4d9c" /></svg>
                    <Trade $w={65} $tone="buy">Buy MKT</Trade>
                    <Trade $w={63} $tone="sell">Sell MKT</Trade>
                    <Trade $w={68} $tone="off">Cancel...</Trade>
                    <Trade $w={63} $tone="plain">Reverse</Trade>
                    <Trade $w={54} $tone="plain">Flatten</Trade>
                    <FlatWrench grip="#d08020" />
                  </TradeRow>
                  <InfoLine>
                    <Info $tool>
                      <Cell $w={73} $pad={7} $b $c="#12a030">AET 1 d 1m</Cell>
                      <Cell $w={93}>D: 24.09.12 18:41</Cell>
                      <Cell $w={49}>O: 40.27</Cell>
                      <Cell $w={48}>H: 40.27</Cell>
                      <Cell $w={47}>L: 40.18</Cell>
                      <Cell $w={48}>C: 40.18</Cell>
                      <Cell $w={42}>R: 0.09</Cell>
                      <Cell $w={178} $c="#f01010">MovAvgExponential (CLOSE, 50, 0)</Cell>
                      <Cell $w={35} $c="#f01010">39.94</Cell>
                      <Cell $w={56} $c="#173c44">SPY (/ES)</Cell>
                      <Cell $w={32} $c="#173c44">1449</Cell>
                    </Info>
                    <Square aria-label="Drawing hand" $mr={30}><DrawHand /></Square>
                  </InfoLine>
                  <PriceChart />
                  <Gap $h={1} /><HBar $h={6} /><Gap $h={1} />
                  <InfoLine>
                    <Info>
                      <Cell $w={49} $pad={7}>Volume</Cell>
                      <Cell $w={41}>22,957</Cell>
                      <Unit>&lt;thousands&gt;</Unit>
                    </Info>
                  </InfoLine>
                  <VolumeChart />
                  <Bottom at={47.5} size={24.5} />
                </ChartCol>
                <SideTabs>
                  <SideTab $h={27} $on>Trd</SideTab>
                  <Notch />
                  <SideTab $h={32} $mt={-5}>T&amp;S</SideTab>
                  <SideTab $h={25}>AT</SideTab>
                  <SideTab $h={47}>Buttons</SideTab>
                  <SideTab $h={38} $on>Chart</SideTab>
                  <Notch />
                  <SideTab $h={26} $mt={-5}>DB</SideTab>
                  <SideTab $h={25}>L 2</SideTab>
                  <SideTab $h={38}>News</SideTab>
                </SideTabs>
              </Split>
            </Primary>
            <VBar />
            <SideStrip w={16} h={400} />
            <VBar />
            <SideStrip w={16} h={400} />
          </Row>

          <HBar $h={3} />
          <Row>
            <VBar $w={2} />
            <Panel>
              <ChartHeader symbol="AET" name="AETNA US HEALTHCARE COM" period="D" price="40.26" change={"+.66\n+1.67%"} />
              <DayChart />
              <Gap $h={5} />
              <Bottom at={67.5} size={12} hand />
            </Panel>
            <VBar />
            <SideStrip w={17} h={100} />
            <VBar />
            <Panel>
              <ChartHeader symbol="AET" name="AETNA US HEALTHCARE COM" period="5m" price="40.26" change={"+.66\n+1.67%"} />
              <FiveChart />
              <Gap $h={5} />
              <Bottom at={68.5} size={15} />
            </Panel>
          </Row>

          <HBar $h={4} />
          <Row>
            <VBar $w={2} />
            <Quarter><ChartHeader compact focus symbol="FUE" name="FIRELL" period="1m" price="21.05" down change={"+.35\n+1.69%"} /></Quarter>
            <VBar $w={4} />
            <Quarter><ChartHeader compact short symbol="" name="" period="1m" price="00" change={"0\n0%"} changeColor="#e0a010" /></Quarter>
            <VBar $w={4} />
            <Quarter><ChartHeader compact focus symbol="AET" name="AETNA" period="1m" price="40.26" change={"+.66\n+1.67%"} /></Quarter>
            <VBar $w={4} />
            <Quarter><ChartHeader compact symbol="LUKB" name="LIN" period="1m" price="100.11" change={"+.68\n+.68%"} /></Quarter>
          </Row>
        </Main>
      </Body>
    </Page>
  );
}
